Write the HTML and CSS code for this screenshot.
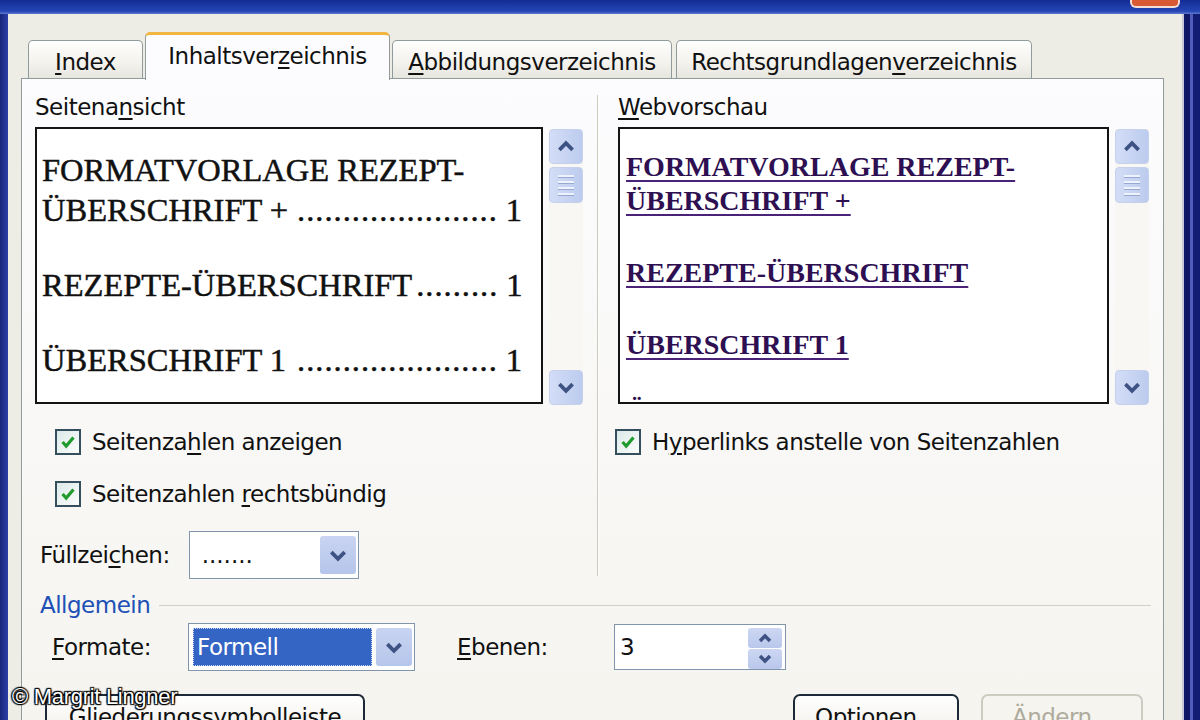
FILE: index.html
```html
<!DOCTYPE html>
<html lang="de">
<head>
    <meta charset="UTF-8">
    <meta name="viewport" content="width=device-width, initial-scale=1.0">
    <title>Index und Verzeichnisse</title>
    <link rel="stylesheet" href="styles.css">
</head>
<body>
    <div class="titlebar"><div class="close-btn"></div></div>
    <div class="frame">
        <div class="frame-left"></div>
        <div class="client">
            <div class="tabs">
                <div class="tab tab-index"><u>I</u>ndex</div>
                <div class="tab active">Inhaltsver<u>z</u>eichnis</div>
                <div class="tab tab-abb"><u>A</u>bbildungsverzeichnis</div>
                <div class="tab tab-rechts">Rechtsgrundlagen<u>v</u>erzeichnis</div>
            </div>
            <div class="panel">
                <div class="columns">
                    <div class="col col-left">
                        <div class="label">Seitena<u>n</u>sicht</div>
                        <div class="preview-row">
                            <div class="preview print">
                                <div class="entry">
                                    <div class="toc-line">FORMATVORLAGE REZEPT-</div>
                                    <div class="toc-line"><span>ÜBERSCHRIFT +</span><span class="leader">......................</span><span>1</span></div>
                                </div>
                                <div class="entry">
                                    <div class="toc-line"><span>REZEPTE-ÜBERSCHRIFT</span><span class="leader">.........</span><span>1</span></div>
                                </div>
                                <div class="entry">
                                    <div class="toc-line"><span>ÜBERSCHRIFT 1</span><span class="leader">......................</span><span>1</span></div>
                                </div>
                            </div>
                            <div class="scrollbar">
                                <div class="sb-btn"><svg viewBox="0 0 34 35"><polyline points="10,21 17,14 24,21"/></svg></div>
                                <div class="sb-thumb"><span></span><span></span><span></span><span></span></div>
                                <div class="sb-track"></div>
                                <div class="sb-btn"><svg viewBox="0 0 34 35"><polyline points="10,14 17,21 24,14"/></svg></div>
                            </div>
                        </div>
                        <div class="check first">
                            <span class="box"><svg viewBox="0 0 22 22"><path d="M5 11 L9 15.5 L17 6"/></svg></span>
                            <span>Seitenza<u>h</u>len anzeigen</span>
                        </div>
                        <div class="check second">
                            <span class="box"><svg viewBox="0 0 22 22"><path d="M5 11 L9 15.5 L17 6"/></svg></span>
                            <span>Seitenzahlen <u>r</u>echtsbündig</span>
                        </div>
                        <div class="fill-row">
                            <span>Füllzei<u>c</u>hen:</span>
                            <div class="combo combo-fill">
                                <span class="combo-value">.......</span>
                                <span class="combo-btn"><svg viewBox="0 0 36 40"><polyline points="11,17 18,24 25,17"/></svg></span>
                            </div>
                        </div>
                    </div>
                    <div class="vsep"></div>
                    <div class="col col-right">
                        <div class="label"><u>W</u>ebvorschau</div>
                        <div class="preview-row">
                            <div class="preview web">
                                <div class="entry"><span class="link">FORMATVORLAGE REZEPT-<br>ÜBERSCHRIFT +</span></div>
                                <div class="entry"><span class="link">REZEPTE-ÜBERSCHRIFT</span></div>
                                <div class="entry"><span class="link">ÜBERSCHRIFT 1</span></div>
                                <div class="entry peek"><span class="link">ÜBERSCHRIFT 2</span></div>
                            </div>
                            <div class="scrollbar">
                                <div class="sb-btn"><svg viewBox="0 0 34 35"><polyline points="10,21 17,14 24,21"/></svg></div>
                                <div class="sb-thumb"><span></span><span></span><span></span><span></span></div>
                                <div class="sb-track"></div>
                                <div class="sb-btn"><svg viewBox="0 0 34 35"><polyline points="10,14 17,21 24,14"/></svg></div>
                            </div>
                        </div>
                        <div class="check first">
                            <span class="box"><svg viewBox="0 0 22 22"><path d="M5 11 L9 15.5 L17 6"/></svg></span>
                            <span>H<u>y</u>perlinks anstelle von Seitenzahlen</span>
                        </div>
                    </div>
                </div>

                <div class="group-head">
                    <span>Allgemein</span>
                    <div class="group-line"></div>
                </div>
                <div class="format-row">
                    <span class="format-label"><u>F</u>ormate:</span>
                    <div class="combo combo-format">
                        <span class="combo-sel">Formell</span>
                        <span class="combo-btn"><svg viewBox="0 0 36 40"><polyline points="11,17 18,24 25,17"/></svg></span>
                    </div>
                    <span class="ebenen-label"><u>E</u>benen:</span>
                    <div class="spin">
                        <span class="spin-value">3</span>
                        <div class="spin-btns">
                            <span><svg viewBox="0 0 34 20"><polyline points="12,13 17,8 22,13"/></svg></span>
                            <span><svg viewBox="0 0 34 20"><polyline points="12,7 17,12 22,7"/></svg></span>
                        </div>
                    </div>
                </div>
                <div class="btn-row">
                    <div class="xp-btn btn-glied">Gliederungssymbo<u>l</u>leiste</div>
                    <div class="spacer"></div>
                    <div class="xp-btn btn-opt">Optionen...</div>
                    <div class="xp-btn btn-aendern disabled">Ändern...</div>
                </div>
            </div>
        </div>
        <div class="frame-right"></div>
    </div>

    <div class="watermark">© Margrit Lingner</div>
</body>
</html>
```

FILE: styles.css
```css
body {
    margin: 0;
    height: 720px;
    overflow: hidden;
    background-color: #1a2a8a;
    font-family: "DejaVu Sans", Tahoma, sans-serif;
    font-size: 23px;
    letter-spacing: -0.5px;
    color: #111;
    position: relative;
}
u {
    text-decoration-thickness: 2px;
    text-underline-offset: 3px;
}
svg polyline,
svg path {
    fill: none;
    stroke: #3e5283;
    stroke-width: 4;
}

/* window frame */
.titlebar {
    height: 14px;
    background: linear-gradient(#142c94, #2445b4 80%, #6078d0);
    display: flex;
    justify-content: flex-end;
    padding-right: 20px;
}
.close-btn {
    width: 46px;
    height: 6px;
    background-color: #d85a34;
    border: 2px solid #f1ddd6;
    border-top: none;
    border-radius: 0 0 6px 6px;
}
.frame {
    display: flex;
    height: 706px;
}
.frame-left {
    width: 8px;
    background: linear-gradient(90deg, #16247c, #2b3ea6);
}
.frame-right {
    width: 18px;
    background: linear-gradient(90deg, #c9c8d8 0 2px, #0e1866 2px 8px, #4f5cbc 8px 11px, #121c72 11px);
}
.client {
    flex: 1;
    background-color: #eeede5;
    padding: 18px 18px 0 13px;
}

/* tabs */
.tabs {
    display: flex;
    align-items: flex-end;
    gap: 2px;
    padding-left: 7px;
    position: relative;
    z-index: 1;
}
.tab {
    height: 38px;
    box-sizing: border-box;
    border: 1px solid #919b9c;
    border-bottom: none;
    border-radius: 5px 5px 0 0;
    background: linear-gradient(#fefefe, #f3f2ed 60%, #e6e5de);
    display: flex;
    align-items: center;
    justify-content: center;
    padding-top: 5px;
    white-space: nowrap;
}
.tab-index { width: 115px; }
.tab-abb { width: 280px; }
.tab-rechts { width: 356px; margin-left: 2px; }
.tab.active {
    width: 245px;
    height: 48px;
    margin-bottom: -2px;
    border-top: 3px solid #f2b640;
    background: #fcfcfe;
    padding-top: 0;
    padding-bottom: 4px;
}

/* panel */
.panel {
    height: 660px;
    border: 1px solid #919b9c;
    background: linear-gradient(#fcfcfe, #f5f4ef);
    padding: 15px 12px 0 13px;
}
.columns {
    display: flex;
}
.col-left { width: 548px; }
.col-right { width: 535px; }
.vsep {
    width: 1px;
    border-left: 1px solid #cbc9bc;
    background-color: #fff;
    margin: 1px 16px 3px 14px;
}
.label {
    height: 26px;
    line-height: 26px;
}
.col-right .label,
.col-right .preview-row {
    margin-left: 3px;
}
.preview-row {
    display: flex;
    gap: 6px;
    margin-top: 7px;
}
.preview {
    box-sizing: border-box;
    height: 277px;
    border: 2px solid #141414;
    background-color: #fff;
    overflow: hidden;
    letter-spacing: 0;
}
.col-left .preview { width: 508px; }
.col-right .preview { width: 491px; }

/* page preview */
.print {
    padding: 21px 19px 0 5px;
    font-family: "Liberation Serif", "Times New Roman", serif;
    font-size: 32.5px;
    line-height: 40px;
    color: #111;
    -webkit-text-stroke: 0.5px #111;
}
.print .entry + .entry {
    margin-top: 35px;
}
.toc-line {
    display: flex;
    white-space: nowrap;
}
.leader {
    flex: 1;
    text-align: right;
    margin: 0 8px 0 4px;
    letter-spacing: 1px;
}

/* web preview */
.web {
    padding: 21px 0 0 6px;
    font-family: "Liberation Serif", "Times New Roman", serif;
    font-weight: bold;
    font-size: 28px;
    line-height: 34px;
    color: #2e1052;
}
.web .entry + .entry {
    margin-top: 38px;
}
.web .entry.peek {
    margin-top: 32px;
}
.link {
    text-decoration: underline;
    text-decoration-thickness: 2px;
    text-underline-offset: 4px;
    text-decoration-color: #4a2278;
}

/* scrollbar */
.scrollbar {
    width: 34px;
    height: 276px;
    margin-top: 2px;
    display: flex;
    flex-direction: column;
    background-color: #f8f7f3;
}
.sb-btn,
.sb-thumb {
    box-sizing: border-box;
    border: 1px solid #c4d0ec;
    border-radius: 4px;
    background: linear-gradient(90deg, #d3ddf6, #bccbee);
}
.sb-btn {
    height: 35px;
}
.sb-btn svg {
    display: block;
    width: 100%;
    height: 100%;
}
.sb-thumb {
    height: 36px;
    margin-top: 3px;
    display: flex;
    flex-direction: column;
    justify-content: center;
    align-items: center;
    gap: 4px;
}
.sb-thumb span {
    width: 16px;
    height: 2px;
    background-color: #eef2fc;
    box-shadow: 0 1px 0 #98a8d0;
}
.sb-track {
    flex: 1;
}

/* checkboxes */
.check {
    display: flex;
    align-items: center;
    gap: 11px;
    height: 26px;
    white-space: nowrap;
}
.col-left .check { margin-left: 20px; }
.check.first { margin-top: 24px; }
.check.second { margin-top: 26px; }
.box {
    width: 26px;
    height: 26px;
    box-sizing: border-box;
    border: 2px solid #35505c;
    background: linear-gradient(135deg, #dceae9, #fbfcfc);
    display: flex;
    align-items: center;
    justify-content: center;
}
.box svg {
    width: 20px;
    height: 20px;
}
.box svg path {
    stroke: #1f9a2c;
    stroke-width: 3.5;
}

/* combos */
.fill-row {
    display: flex;
    align-items: center;
    gap: 19px;
    height: 48px;
    margin: 24px 0 0 5px;
}
.combo {
    box-sizing: border-box;
    height: 48px;
    border: 1px solid #8196ad;
    background-color: #fff;
    display: flex;
    align-items: stretch;
    padding: 4px 2px 4px 4px;
    gap: 4px;
}
.combo-fill { width: 170px; }
.combo-value {
    flex: 1;
    padding: 6px 0 0 8px;
    letter-spacing: 0;
}
.combo-btn {
    width: 36px;
    border-radius: 3px;
    background: linear-gradient(#c9d4f1, #b6c5eb);
}
.combo-btn svg {
    display: block;
    width: 100%;
    height: 100%;
}
.combo-format {
    width: 227px;
}
.combo-sel {
    flex: 1;
    background-color: #3464c4;
    color: #fff;
    outline: 1px dotted #c8d4ee;
    outline-offset: -1px;
    display: flex;
    align-items: center;
    padding-left: 4px;
}

/* Allgemein */
.group-head {
    display: flex;
    align-items: center;
    height: 26px;
    margin: 13px 0 0 5px;
    color: #2050b6;
}
.group-line {
    flex: 1;
    height: 1px;
    margin-left: 9px;
    background-color: #d2d0c2;
}
.format-row {
    display: flex;
    align-items: center;
    height: 48px;
    margin: 5px 0 0 17px;
}
.format-label { width: 136px; }
.ebenen-label {
    width: 157px;
    margin-left: 42px;
}
.spin {
    box-sizing: border-box;
    width: 172px;
    height: 46px;
    border: 1px solid #8196ad;
    background-color: #fff;
    display: flex;
    padding: 3px;
}
.spin-value {
    flex: 1;
    padding-left: 2px;
    display: flex;
    align-items: center;
}
.spin-btns {
    width: 34px;
    display: flex;
    flex-direction: column;
    gap: 1px;
}
.spin-btns span {
    flex: 1;
    border-radius: 3px;
    background: linear-gradient(#cdd7f2, #b9c7ec);
}
.spin-btns svg {
    display: block;
    width: 100%;
    height: 100%;
}
.spin-btns polyline {
    stroke-width: 3.5;
}

/* buttons */
.btn-row {
    display: flex;
    gap: 22px;
    margin: 23px 8px 0 10px;
}
.spacer { flex: 1; }
.xp-btn {
    box-sizing: border-box;
    height: 46px;
    border: 2px solid #1e2937;
    border-radius: 7px;
    background: linear-gradient(#ffffff, #f4f3ee 70%, #e2dfd5);
    display: flex;
    align-items: center;
    justify-content: center;
    white-space: nowrap;
}
.btn-glied { width: 320px; }
.btn-opt { width: 166px; }
.btn-aendern { width: 162px; }
.xp-btn.disabled {
    border-color: #cdcbbf;
    color: #aeab9c;
    background: #f5f4ef;
}

.watermark {
    position: absolute;
    left: 12px;
    top: 684px;
    font-family: "Liberation Sans", Arial, sans-serif;
    font-size: 22px;
    letter-spacing: -0.3px;
    color: #fff;
    text-shadow: 0 0 2px #000, 1px 1px 1px #000, -1px -1px 1px #000, 1px -1px 1px #000, -1px 1px 1px #000;
}
```
